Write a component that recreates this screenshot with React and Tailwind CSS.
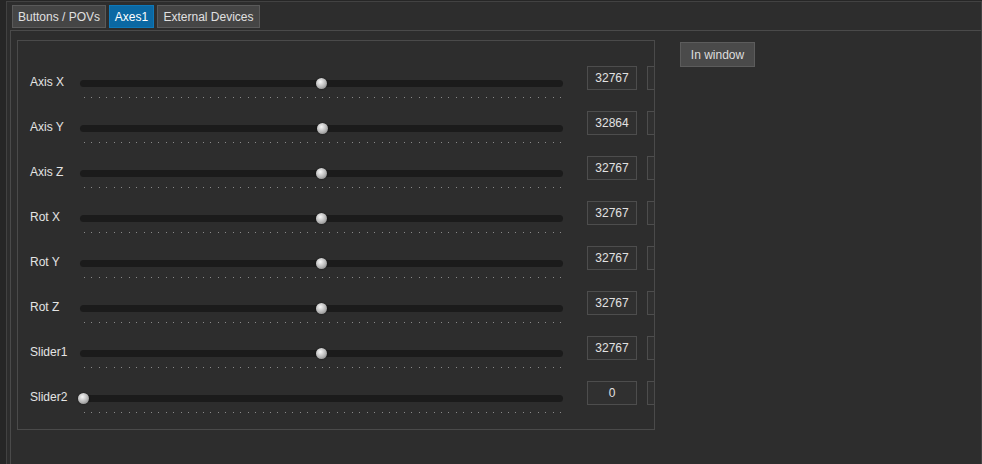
import React from "react";

const axes = [
  { label: "Axis X", value: 32767 },
  { label: "Axis Y", value: 32864 },
  { label: "Axis Z", value: 32767 },
  { label: "Rot X", value: 32767 },
  { label: "Rot Y", value: 32767 },
  { label: "Rot Z", value: 32767 },
  { label: "Slider1", value: 32767 },
  { label: "Slider2", value: 0 },
];

const dots = Array.from({ length: 65 });

function Row({ label, value }) {
  const frac = value / 65535;
  const left = 3 + 477 * frac - 5.5;
  return (
    <div className="h-[45px] flex items-start pl-[12px] shrink-0">
      <div className="w-[50px] shrink-0 pt-[15px] text-[12px] leading-[14px] text-[#e4e4e4] whitespace-nowrap">{label}</div>
      <div className="w-[483px] shrink-0 relative h-[45px]">
        <div className="absolute left-0 right-0 top-[20px] h-[7px] rounded-full bg-[#1b1b1b]" />
        <div
          className="absolute top-[18px] w-[11px] h-[11px] rounded-full bg-[radial-gradient(circle_at_40%_35%,#f6f6f6,#b4b4b4_55%,#6e6e6e)] shadow-[0_0_2px_rgba(0,0,0,0.6)]"
          style={{ left: `${left}px` }}
        />
        <div className="absolute left-[4px] w-[477px] top-[37px] h-[1px] flex justify-between">
          {dots.map((_, i) => (
            <div key={i} className="w-[1px] h-[1px] bg-[#8a8a8a]" />
          ))}
        </div>
      </div>
      <div className="ml-[24px] mt-[6px] w-[50px] h-[24px] shrink-0 border border-[#4d4d4d] bg-[#303030] flex items-center justify-center text-[12px] text-[#e2e2e2]">
        {value}
      </div>
      <div className="ml-[10px] mt-[6px] w-[50px] h-[24px] border border-[#4d4d4d] bg-[#303030] shrink-0" />
    </div>
  );
}

export default function App() {
  return (
    <div
      className="w-[982px] h-[464px] flex bg-[#262626] overflow-hidden"
      style={{ fontFamily: '"Liberation Sans", Arial, sans-serif' }}
    >
      <div className="w-[6px] shrink-0" />
      <div className="flex-1 mt-[1px] border-l border-t border-r border-[#424242] bg-[#2d2d2d] flex flex-col">
        <div className="flex pl-[5px] pt-[3px] gap-[3px] h-[26px] text-[12px] shrink-0">
          <div className="w-[94px] h-[23px] bg-[#454545] border border-[#5a5a5a] text-[#e0e0e0] flex items-center justify-center">
            Buttons / POVs
          </div>
          <div className="w-[45px] h-[23px] bg-[#0b68a3] border border-[#0e78b8] text-white flex items-center justify-center">
            Axes1
          </div>
          <div className="w-[103px] h-[23px] bg-[#454545] border border-[#5a5a5a] text-[#e0e0e0] flex items-center justify-center">
            External Devices
          </div>
        </div>
        <div className="ml-[3px] mt-[2px] flex-1 border-l border-t border-[#4a4a4a] flex items-start">
          <div className="ml-[6px] mt-[9px] w-[638px] h-[390px] shrink-0 border border-[#4a4a4a] overflow-hidden flex flex-col pt-[19px]">
            {axes.map((a) => (
              <Row key={a.label} label={a.label} value={a.value} />
            ))}
          </div>
          <div className="ml-[25px] mt-[11px] w-[75px] h-[25px] shrink-0 bg-[#4a4a4a] border border-[#5c5c5c] text-[12px] text-[#dedede] flex items-center justify-center">
            In window
          </div>
        </div>
      </div>
    </div>
  );
}
